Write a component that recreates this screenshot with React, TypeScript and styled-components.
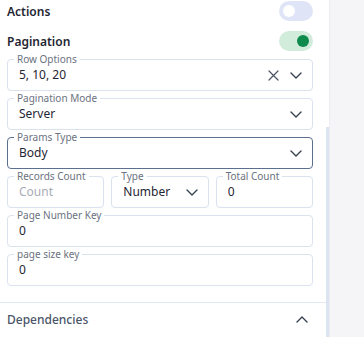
import styled, { createGlobalStyle } from 'styled-components';

const GlobalStyle = createGlobalStyle`
    body {
        margin: 0;
        font-family: "Noto Sans", "Inter", sans-serif;
        background: #ffffff;
    }
`;

const Page = styled.div`
    display: flex;
    width: 364px;
    height: 337px;
    overflow: hidden;
`;

const Panel = styled.div`
    width: 326px;
    display: flex;
    flex-direction: column;
    background: #ffffff;
`;

const Body = styled.div`
    display: flex;
    flex-direction: column;
    padding: 0 13px 0 7px;
`;

const Toggles = styled.div`
    display: flex;
    flex-direction: column;
    gap: 8px;
    margin-bottom: 1px;
`;

const ToggleRow = styled.div`
    display: flex;
    align-items: center;
    justify-content: space-between;
    height: 22px;
`;

const Title = styled.span`
    font-size: 12px;
    font-weight: 600;
    color: #1f2633;
`;

const Switch = styled.div<{ on?: boolean }>`
    width: 34px;
    height: 20px;
    border-radius: 10px;
    display: flex;
    align-items: center;
    justify-content: ${p => (p.on ? 'flex-end' : 'flex-start')};
    padding: 0 4px;
    box-sizing: border-box;
    background: ${p => (p.on ? '#d2ecdb' : '#dfe5f6')};

    &::after {
        content: "";
        width: 12px;
        height: 12px;
        border-radius: 50%;
        background: ${p => (p.on ? '#0e8a4d' : '#ffffff')};
    }
`;

const Fields = styled.div`
    display: flex;
    flex-direction: column;
    gap: 1px;
`;

const Row = styled.div`
    display: grid;
    grid-template-columns: 1fr 1fr 1fr;
    column-gap: 7px;
`;

const Field = styled.fieldset<{ focused?: boolean }>`
    margin: 0;
    min-width: 0;
    padding: 0 10px 5px 11px;
    border: 1px solid ${p => (p.focused ? '#5b6f8f' : '#dae2ee')};
    border-radius: 4px;
`;

const Legend = styled.legend`
    font-size: 10px;
    line-height: 12px;
    color: #6b7280;
    padding: 0 3px;
    margin-left: -5px;
`;

const Control = styled.div`
    display: flex;
    align-items: center;
    height: 20px;
`;

const Value = styled.div<{ muted?: boolean }>`
    flex: 1;
    font-size: 12px;
    line-height: 16px;
    color: ${p => (p.muted ? '#a8adb6' : '#1f2633')};
    white-space: nowrap;
`;

const Icons = styled.div`
    display: flex;
    align-items: center;
    gap: 11px;
    color: #4b5563;
`;

const Divider = styled.div`
    height: 1px;
    background: #e3e8ef;
    margin-top: 16px;
`;

const Section = styled.div`
    display: flex;
    align-items: center;
    justify-content: space-between;
    padding: 0 18px 0 7px;
    height: 36px;
`;

const SectionTitle = styled.span`
    font-size: 12px;
    font-weight: 500;
    color: #4a5568;
`;

const ScrollTrack = styled.div`
    width: 3px;
    display: flex;
    flex-direction: column;
`;

const Thumb = styled.div`
    margin-top: 127px;
    flex: 1;
    background: #dbe4f1;
`;

const Side = styled.div`
    flex: 1;
    border-left: 1px solid #ececf0;
    background: #f5f5f7;
`;

const Chevron = ({ up }: { up?: boolean }) => (
    <svg width="12" height="7" viewBox="0 0 12 7" fill="none" stroke="#374151" strokeWidth="1.4" strokeLinecap="round" strokeLinejoin="round">
        {up ? <path d="M1 6L6 1L11 6" /> : <path d="M1 1L6 6L11 1" />}
    </svg>
);

const Close = () => (
    <svg width="11" height="11" viewBox="0 0 11 11" fill="none" stroke="#4b5563" strokeWidth="1.2" strokeLinecap="round">
        <path d="M1 1L10 10M10 1L1 10" />
    </svg>
);

const App = () => {
    return (
        <Page>
            <GlobalStyle />
            <Panel>
                <Body>
                    <Toggles>
                        <ToggleRow>
                            <Title>Actions</Title>
                            <Switch />
                        </ToggleRow>
                        <ToggleRow>
                            <Title>Pagination</Title>
                            <Switch on />
                        </ToggleRow>
                    </Toggles>
                    <Fields>
                        <Field>
                            <Legend>Row Options</Legend>
                            <Control>
                                <Value>5, 10, 20</Value>
                                <Icons><Close /><Chevron /></Icons>
                            </Control>
                        </Field>
                        <Field>
                            <Legend>Pagination Mode</Legend>
                            <Control>
                                <Value>Server</Value>
                                <Icons><Chevron /></Icons>
                            </Control>
                        </Field>
                        <Field focused>
                            <Legend>Params Type</Legend>
                            <Control>
                                <Value>Body</Value>
                                <Icons><Chevron /></Icons>
                            </Control>
                        </Field>
                        <Row>
                            <Field>
                                <Legend>Records Count</Legend>
                                <Control>
                                    <Value muted>Count</Value>
                                </Control>
                            </Field>
                            <Field>
                                <Legend>Type</Legend>
                                <Control>
                                    <Value>Number</Value>
                                    <Icons><Chevron /></Icons>
                                </Control>
                            </Field>
                            <Field>
                                <Legend>Total Count</Legend>
                                <Control>
                                    <Value>0</Value>
                                </Control>
                            </Field>
                        </Row>
                        <Field>
                            <Legend>Page Number Key</Legend>
                            <Control>
                                <Value>0</Value>
                            </Control>
                        </Field>
                        <Field>
                            <Legend>page size key</Legend>
                            <Control>
                                <Value>0</Value>
                            </Control>
                        </Field>
                    </Fields>
                </Body>
                <Divider />
                <Section>
                    <SectionTitle>Dependencies</SectionTitle>
                    <Chevron up />
                </Section>
            </Panel>
            <ScrollTrack>
                <Thumb />
            </ScrollTrack>
            <Side />
        </Page>
    );
};

export default App;
